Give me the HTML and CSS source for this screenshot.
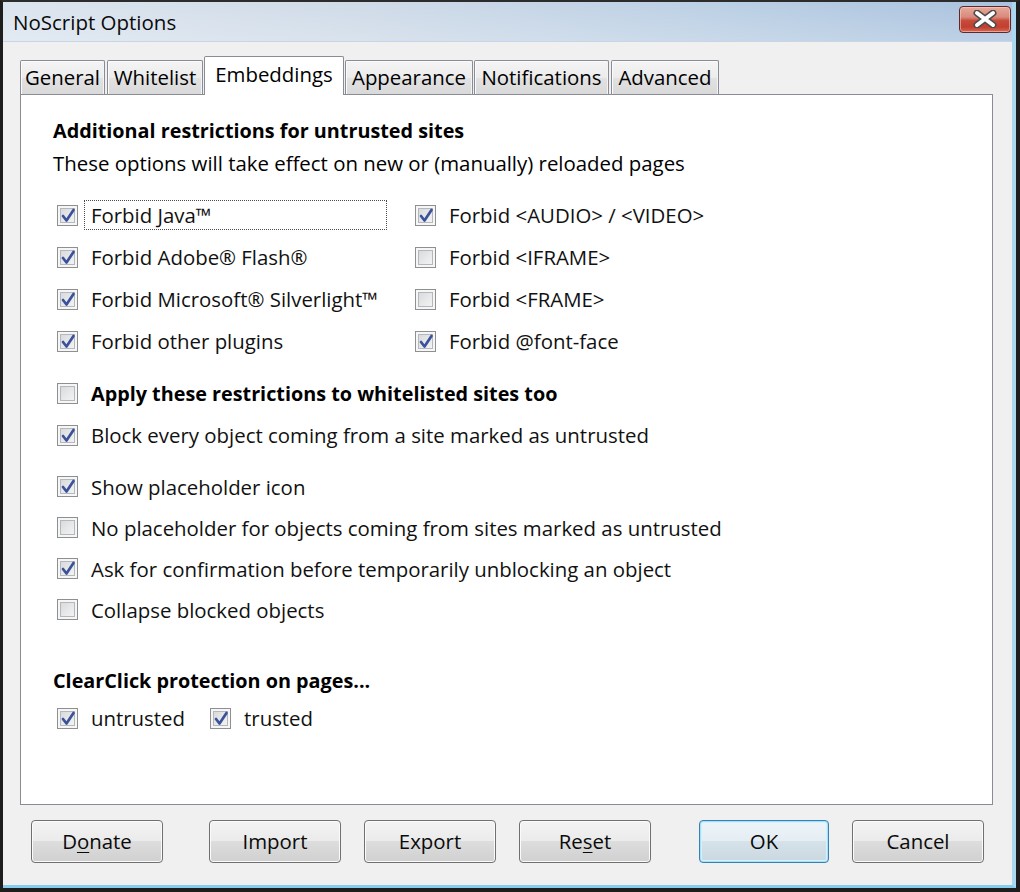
FILE: index.html
```html
<!DOCTYPE html>
<html>
<head>
<meta charset="utf-8">
<title>NoScript Options</title>
<link rel="stylesheet" href="styles.css">
</head>
<body>
<div class="window">
  <div class="frame">
    <div class="titlebar">
      <span class="title">NoScript Options</span>
      <span class="close">
        <svg width="26" height="18" viewBox="0 0 26 18">
          <path d="M5 3 L21 15 M21 3 L5 15" stroke="#4b4b4b" stroke-width="7" stroke-linecap="round"/>
          <path d="M5 3 L21 15 M21 3 L5 15" stroke="#ffffff" stroke-width="4" stroke-linecap="round"/>
        </svg>
      </span>
    </div>
    <div class="body">
      <div class="tabs">
        <div class="tab t-general">General</div>
        <div class="tab t-white">Whitelist</div>
        <div class="tab selected t-embed">Embeddings</div>
        <div class="tab t-appear">Appearance</div>
        <div class="tab t-notif">Notifications</div>
        <div class="tab t-adv">Advanced</div>
      </div>
      <div class="panel">
        <div class="heading">Additional restrictions for untrusted sites</div>
        <div class="sub">These options will take effect on new or (manually) reloaded pages</div>

        <div class="grid">
          <div class="row"><span class="cb on"><svg viewBox="1 1 19 19"><path d="M6 11 L9.5 15.5 L16.5 5"/></svg></span><span class="lbl focus">Forbid Java™</span></div>
          <div class="row"><span class="cb on"><svg viewBox="1 1 19 19"><path d="M6 11 L9.5 15.5 L16.5 5"/></svg></span><span class="lbl">Forbid &lt;AUDIO&gt; / &lt;VIDEO&gt;</span></div>
          <div class="row"><span class="cb on"><svg viewBox="1 1 19 19"><path d="M6 11 L9.5 15.5 L16.5 5"/></svg></span><span class="lbl">Forbid Adobe® Flash®</span></div>
          <div class="row"><span class="cb"></span><span class="lbl">Forbid &lt;IFRAME&gt;</span></div>
          <div class="row"><span class="cb on"><svg viewBox="1 1 19 19"><path d="M6 11 L9.5 15.5 L16.5 5"/></svg></span><span class="lbl">Forbid Microsoft® Silverlight™</span></div>
          <div class="row"><span class="cb"></span><span class="lbl">Forbid &lt;FRAME&gt;</span></div>
          <div class="row"><span class="cb on"><svg viewBox="1 1 19 19"><path d="M6 11 L9.5 15.5 L16.5 5"/></svg></span><span class="lbl">Forbid other plugins</span></div>
          <div class="row"><span class="cb on"><svg viewBox="1 1 19 19"><path d="M6 11 L9.5 15.5 L16.5 5"/></svg></span><span class="lbl">Forbid @font-face</span></div>
        </div>

        <div class="group g1">
          <div class="row"><span class="cb"></span><span class="lbl bold">Apply these restrictions to whitelisted sites too</span></div>
          <div class="row"><span class="cb on"><svg viewBox="1 1 19 19"><path d="M6 11 L9.5 15.5 L16.5 5"/></svg></span><span class="lbl">Block every object coming from a site marked as untrusted</span></div>
        </div>

        <div class="group g2">
          <div class="row r41"><span class="cb on"><svg viewBox="1 1 19 19"><path d="M6 11 L9.5 15.5 L16.5 5"/></svg></span><span class="lbl">Show placeholder icon</span></div>
          <div class="row r41"><span class="cb"></span><span class="lbl">No placeholder for objects coming from sites marked as untrusted</span></div>
          <div class="row r41"><span class="cb on"><svg viewBox="1 1 19 19"><path d="M6 11 L9.5 15.5 L16.5 5"/></svg></span><span class="lbl">Ask for confirmation before temporarily unblocking an object</span></div>
          <div class="row r41"><span class="cb"></span><span class="lbl">Collapse blocked objects</span></div>
        </div>

        <div class="heading h2">ClearClick protection on pages...</div>
        <div class="row inline">
          <span class="cb on"><svg viewBox="1 1 19 19"><path d="M6 11 L9.5 15.5 L16.5 5"/></svg></span><span class="lbl">untrusted</span>
          <span class="cb on second"><svg viewBox="1 1 19 19"><path d="M6 11 L9.5 15.5 L16.5 5"/></svg></span><span class="lbl">trusted</span>
        </div>
      </div>
      <div class="buttons">
        <div class="btn"><span>D<u>o</u>nate</span></div>
        <div class="btn wide-gap">Import</div>
        <div class="btn">Export</div>
        <div class="btn">Re<u>s</u>et</div>
        <div class="btn default wide-gap2">OK</div>
        <div class="btn">Cancel</div>
      </div>
    </div>
  </div>
</div>
</body>
</html>
```

FILE: styles.css
```css
html, body {
  margin: 0;
  padding: 0;
  background: #1c1c1c;
}

body {
  width: 1020px;
  height: 892px;
  overflow: hidden;
  font-family: "Open Sans", "Noto Sans", sans-serif;
  font-size: 20.4px;
  color: #000;
}

.window {
  width: 1020px;
  height: 892px;
  box-sizing: border-box;
  border-left: 3px solid #1e1e1e;
  border-top: 2px solid #2c2c2c;
  border-right: 4px solid #1e1e1e;
  border-bottom: 4px solid #1e1e1e;
}

.frame {
  height: 100%;
  box-sizing: border-box;
  border-right: 4px solid #a9d8f0;
  border-bottom: 3px solid #84cdee;
  display: flex;
  flex-direction: column;
  background: #f0f0f0;
}

.titlebar {
  height: 40px;
  flex: none;
  display: flex;
  align-items: center;
  justify-content: space-between;
  padding: 0 1px 0 10px;
  background:
    linear-gradient(to bottom, rgba(255,255,255,0.05), rgba(255,255,255,0.25)),
    linear-gradient(to right, #d9e3ee 0%, #cdd9e7 35%, #b8cde3 70%, #a5bfdc 100%);
  box-shadow: inset 0 -1px 0 #c7d6e6;
}

.title {
  font-size: 20.5px;
  color: #0a0a0a;
  margin-top: -1px;
}

.close {
  width: 50px;
  height: 25px;
  margin-top: -6px;
  border: 1px solid #5b2a2c;
  border-radius: 4px;
  background: linear-gradient(to bottom, #e6a99c 0%, #d98a7b 40%, #c54a3a 55%, #c23f2f 80%, #d66a55 100%);
  box-shadow: inset 0 0 0 1px rgba(255, 210, 200, 0.55);
  display: flex;
  align-items: center;
  justify-content: center;
}

.body {
  flex: 1;
  display: flex;
  flex-direction: column;
  padding: 14px 19px 0 17px;
}

.tabs {
  height: 38px;
  display: flex;
  align-items: flex-end;
  gap: 2px;
  flex: none;
}

.tab {
  height: 34px;
  box-sizing: border-box;
  border: 1px solid #898c95;
  border-bottom: none;
  border-radius: 2px 2px 0 0;
  background: linear-gradient(to bottom, #f4f4f4 0%, #ececec 50%, #e2e2e2 51%, #d9d9d9 100%);
  box-shadow: inset 1px 1px 0 #fbfbfb, inset -1px 0 0 #f4f4f4;
  display: flex;
  align-items: center;
  justify-content: center;
  line-height: 1;
  white-space: nowrap;
}

.t-general { width: 85px; }
.t-white { width: 96px; }
.t-embed { width: 140px; }
.t-appear { width: 128px; }
.t-notif { width: 135px; margin-left: -1px; }
.t-adv { width: 108px; }

.tab.selected {
  height: 39px;
  margin: 0 -1px -1px -1px;
  padding-bottom: 4px;
  background: #ffffff;
  box-shadow: none;
  position: relative;
  z-index: 2;
}

.panel {
  height: 711px;
  box-sizing: border-box;
  border: 1px solid #898c95;
  background: #ffffff;
  padding: 20px 20px 0 32px;
  flex: none;
}

.heading {
  font-weight: 700;
  font-size: 19.8px;
  line-height: 32px;
  height: 32px;
}

.sub {
  line-height: 33px;
  height: 33px;
}

.grid {
  margin-top: 14px;
  display: grid;
  grid-template-columns: 358px 1fr;
  grid-auto-rows: 42px;
}

.row {
  height: 42px;
  display: flex;
  align-items: center;
}

.row.r41 {
  height: 41px;
}

.group.g1 {
  margin-top: 10px;
}

.group.g2 {
  margin-top: 10px;
}

.heading.h2 {
  margin-top: 35px;
}

.cb {
  width: 21px;
  height: 21px;
  flex: none;
  box-sizing: border-box;
  margin-left: 4px;
  margin-right: 6px;
  border: 1px solid #8e8f8f;
  background: linear-gradient(135deg, #d2d4d7 0%, #e8e9ea 55%, #f8f8f8 100%);
  box-shadow: inset 0 0 0 2px #f6f6f6, inset 0 0 0 3px #b4b7bb;
  display: flex;
  align-items: center;
  justify-content: center;
}

.cb svg {
  width: 19px;
  height: 19px;
  display: block;
}

.cb svg path {
  fill: none;
  stroke: #3b529b;
  stroke-width: 2.7;
  stroke-linejoin: round;
  stroke-linecap: round;
}

.lbl {
  padding-left: 7px;
  white-space: nowrap;
  color: #111;
}

.lbl.bold {
  font-weight: 700;
  font-size: 19.8px;
  color: #000;
}

.lbl.focus {
  width: 303px;
  height: 30px;
  box-sizing: border-box;
  padding-left: 6px;
  border: 1px dotted #4a4a4a;
  display: flex;
  align-items: center;
}

.cb.second {
  margin-left: 25px;
}

.buttons {
  margin-top: 15px;
  display: flex;
  padding-left: 11px;
  gap: 23px;
}

.btn {
  width: 132px;
  height: 43px;
  box-sizing: border-box;
  border: 1px solid #707070;
  border-radius: 4px;
  background: linear-gradient(to bottom, #f3f3f3 0%, #ebebeb 49%, #dddddd 50%, #d0d0d0 100%);
  box-shadow: inset 0 0 0 1px #fbfbfb;
  display: flex;
  align-items: center;
  justify-content: center;
  color: #0a0a0a;
  padding-bottom: 2px;
}

.btn u {
  text-decoration-thickness: 1px;
  text-underline-offset: 3px;
}

.btn.wide-gap {
  margin-left: 23px;
}

.btn.wide-gap2 {
  margin-left: 25px;
  width: 130px;
}

.btn.default {
  border-color: #3c7fb1;
  box-shadow: inset 0 0 0 1px #9fe2fa, inset 0 0 0 2px #d4f1fc;
  background: linear-gradient(to bottom, #eef5f9 0%, #e4edf3 49%, #d6e2ea 50%, #cbd8e0 100%);
}
```
